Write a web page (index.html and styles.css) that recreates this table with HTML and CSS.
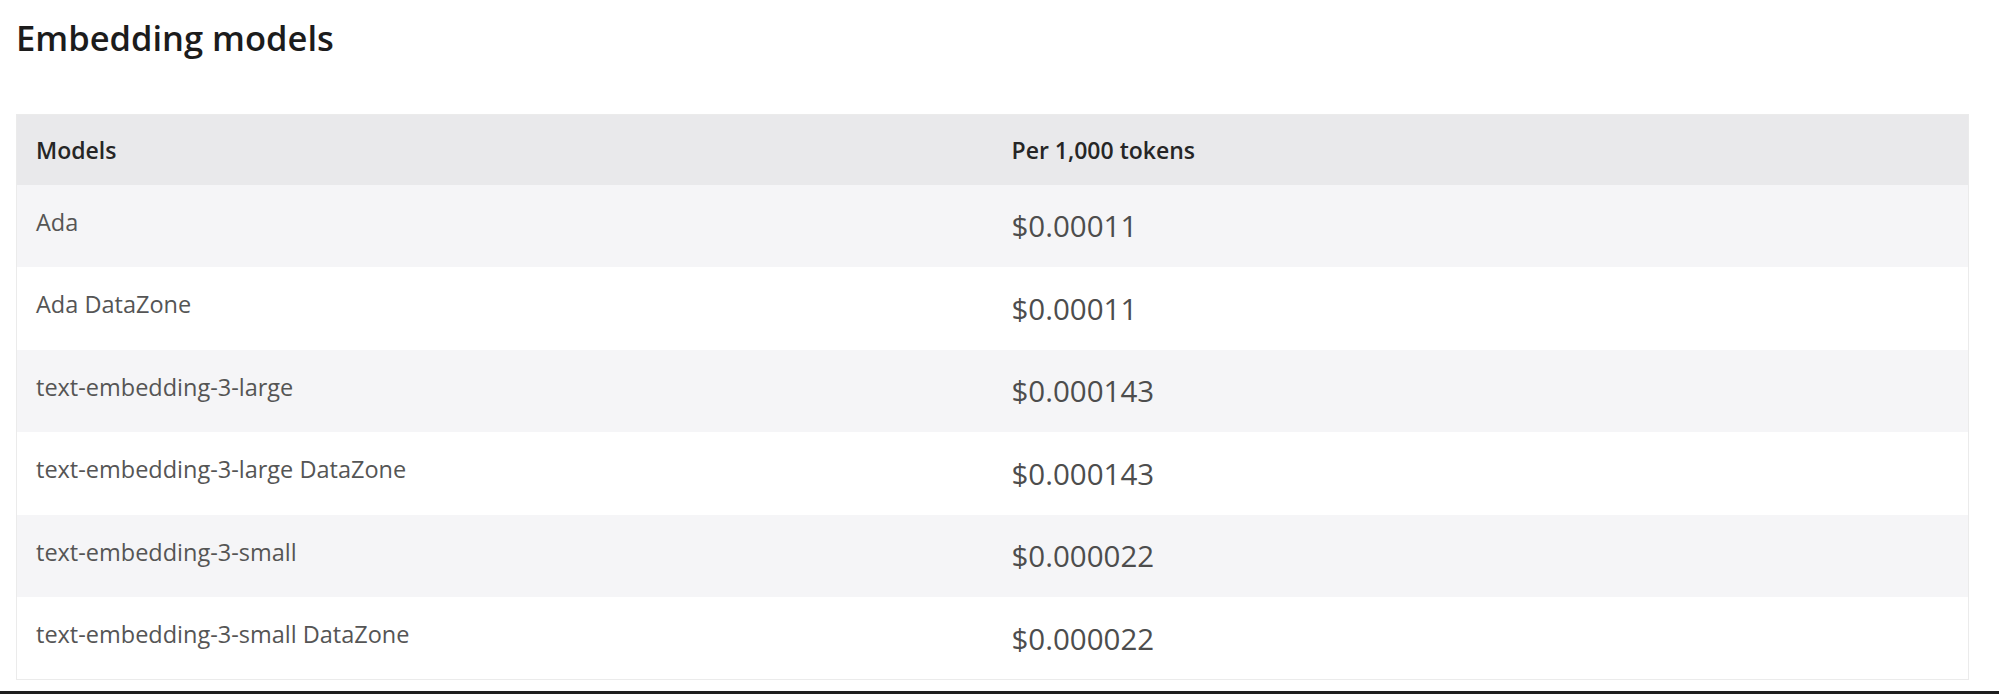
FILE: index.html
```html
<!DOCTYPE html>
<html lang="en">
<head>
<meta charset="utf-8">
<title>Embedding models</title>
<link rel="stylesheet" href="styles.css">
</head>
<body>
<div class="page">
  <main class="content">
    <h2 class="title">Embedding models</h2>
    <table class="pricing">
      <thead>
        <tr><th>Models</th><th>Per 1,000 tokens</th></tr>
      </thead>
      <tbody>
        <tr><td class="model">Ada</td><td class="price">$0.00011</td></tr>
        <tr><td class="model">Ada DataZone</td><td class="price">$0.00011</td></tr>
        <tr><td class="model">text-embedding-3-large</td><td class="price">$0.000143</td></tr>
        <tr><td class="model">text-embedding-3-large DataZone</td><td class="price">$0.000143</td></tr>
        <tr><td class="model">text-embedding-3-small</td><td class="price">$0.000022</td></tr>
        <tr><td class="model">text-embedding-3-small DataZone</td><td class="price">$0.000022</td></tr>
      </tbody>
    </table>
  </main>
  <div class="bottom-rule"></div>
</div>
</body>
</html>
```
FILE: styles.css
```css
* { box-sizing: border-box; }
html, body { margin: 0; padding: 0; background: #ffffff; }
body { font-family: "Open Sans", "Noto Sans", sans-serif; }
.page {
  height: 694px;
  display: flex;
  flex-direction: column;
}
.content {
  flex: 1;
  padding: 0 30px 0 16px;
}
.title {
  margin: 0;
  padding-top: 12px;
  height: 114px;
  font-size: 34.5px;
  font-weight: 600;
  line-height: 52px;
  color: #1c1c1c;
}
.pricing {
  width: 1953px;
  border-collapse: collapse;
  border: 1px solid #ebebeb;
  table-layout: fixed;
}
.pricing th, .pricing td {
  width: 50%;
  text-align: left;
  padding: 0 19px;
}
.pricing thead tr {
  height: 70px;
  background: #e9e9eb;
}
.pricing th {
  font-size: 23px;
  font-weight: 600;
  color: #262626;
}
.pricing tbody tr { height: 82.5px; }
.pricing tbody tr:nth-child(odd) { background: #f5f5f7; }
.pricing tbody tr:nth-child(even) { background: #ffffff; }
.model {
  font-size: 23.5px;
  color: #555555;
  padding-bottom: 8px !important;
}
.price {
  font-size: 29.5px;
  color: #4d4d4d;
}
.bottom-rule {
  height: 3px;
  background: #1e1e1e;
}
```
